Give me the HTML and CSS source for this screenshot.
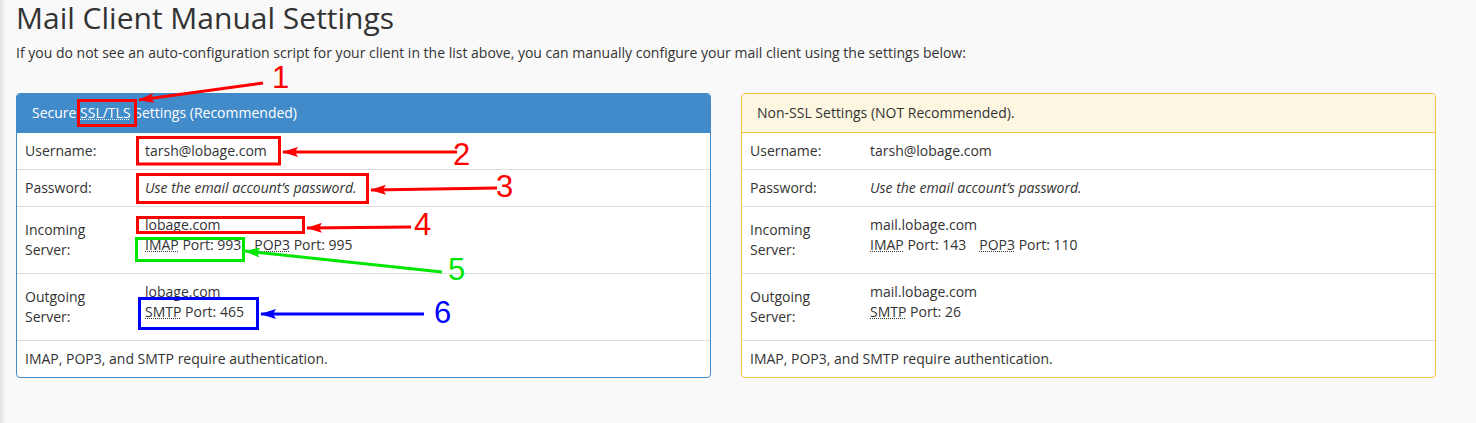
FILE: index.html
```html
<!DOCTYPE html>
<html lang="en">
<head>
<meta charset="utf-8">
<title>Mail Client Manual Settings</title>
<link rel="stylesheet" href="styles.css">
</head>
<body>
<div class="content">
  <h1 class="title">Mail Client Manual Settings</h1>
  <p class="intro">If you do not see an auto-configuration script for your client in the list above, you can manually configure your mail client using the settings below:</p>
  <div class="panels">
    <section class="panel panel-primary">
      <div class="panel-heading">Secure <abbr title="Secure Sockets Layer/Transport Layer Security">SSL/TLS</abbr> Settings (Recommended)</div>
      <div class="row"><div class="label">Username:</div><div class="value">tarsh@lobage.com</div></div>
      <div class="row"><div class="label">Password:</div><div class="value"><em>Use the email account’s password.</em></div></div>
      <div class="row"><div class="label">Incoming Server:</div><div class="value"><div>lobage.com</div><div class="ports"><span><abbr title="Internet Message Access Protocol">IMAP</abbr> Port: 993</span><span><abbr title="Post Office Protocol 3">POP3</abbr> Port: 995</span></div></div></div>
      <div class="row"><div class="label">Outgoing Server:</div><div class="value"><div>lobage.com</div><div class="ports"><span><abbr title="Simple Mail Transfer Protocol">SMTP</abbr> Port: 465</span></div></div></div>
      <div class="row row-full">IMAP, POP3, and SMTP require authentication.</div>
    </section>
    <section class="panel panel-warning">
      <div class="panel-heading">Non-SSL Settings (NOT Recommended).</div>
      <div class="row"><div class="label">Username:</div><div class="value">tarsh@lobage.com</div></div>
      <div class="row"><div class="label">Password:</div><div class="value"><em>Use the email account’s password.</em></div></div>
      <div class="row"><div class="label">Incoming Server:</div><div class="value"><div>mail.lobage.com</div><div class="ports"><span><abbr title="Internet Message Access Protocol">IMAP</abbr> Port: 143</span><span><abbr title="Post Office Protocol 3">POP3</abbr> Port: 110</span></div></div></div>
      <div class="row"><div class="label">Outgoing Server:</div><div class="value"><div>mail.lobage.com</div><div class="ports"><span><abbr title="Simple Mail Transfer Protocol">SMTP</abbr> Port: 26</span></div></div></div>
      <div class="row row-full">IMAP, POP3, and SMTP require authentication.</div>
    </section>
  </div>
</div>

<svg class="annotations" width="1476" height="423" viewBox="0 0 1476 423" aria-hidden="true">
  <defs>
    <marker id="ah-red" viewBox="0 0 16 10" refX="15" refY="5" markerWidth="16" markerHeight="10" markerUnits="userSpaceOnUse" orient="auto">
      <path d="M0 0 L16 5 L0 10 L3 5 Z" fill="#ff0000"/>
    </marker>
    <marker id="ah-green" viewBox="0 0 16 10" refX="15" refY="5" markerWidth="16" markerHeight="10" markerUnits="userSpaceOnUse" orient="auto">
      <path d="M0 0 L16 5 L0 10 L3 5 Z" fill="#00e600"/>
    </marker>
    <marker id="ah-blue" viewBox="0 0 16 10" refX="15" refY="5" markerWidth="16" markerHeight="10" markerUnits="userSpaceOnUse" orient="auto">
      <path d="M0 0 L16 5 L0 10 L3 5 Z" fill="#0000ff"/>
    </marker>
  </defs>
  <g fill="none" stroke-width="3">
    <rect x="78.5" y="100.5" width="57" height="25" stroke="#ff0000"/>
    <rect x="137.5" y="137.5" width="142" height="26.5" stroke="#ff0000"/>
    <rect x="137.5" y="174.5" width="230" height="28" stroke="#ff0000"/>
    <rect x="137.5" y="217.5" width="166" height="15" stroke="#ff0000"/>
    <rect x="136.5" y="238.5" width="107" height="22" stroke="#00e600"/>
    <rect x="139.5" y="298.5" width="118" height="30" stroke="#0000ff"/>
    <line x1="263" y1="83" x2="139" y2="100" stroke="#ff0000" marker-end="url(#ah-red)"/>
    <line x1="457" y1="152" x2="283" y2="152" stroke="#ff0000" marker-end="url(#ah-red)"/>
    <line x1="497" y1="188" x2="371" y2="190" stroke="#ff0000" marker-end="url(#ah-red)"/>
    <line x1="411" y1="227" x2="307" y2="228" stroke="#ff0000" marker-end="url(#ah-red)"/>
    <line x1="442" y1="272" x2="245" y2="251" stroke="#00e600" marker-end="url(#ah-green)"/>
    <line x1="424" y1="314" x2="261" y2="314" stroke="#0000ff" marker-end="url(#ah-blue)"/>
  </g>
  <g class="anno-num">
    <text x="272" y="88" fill="#ff0000">1</text>
    <text x="453" y="165" fill="#ff0000">2</text>
    <text x="496" y="197" fill="#ff0000">3</text>
    <text x="414" y="235" fill="#ff0000">4</text>
    <text x="448" y="280" fill="#00e600">5</text>
    <text x="434" y="323" fill="#0000ff">6</text>
  </g>
</svg>
</body>
</html>
```

FILE: styles.css
```css
html, body {
  margin: 0;
  padding: 0;
}

body {
  position: relative;
  min-height: 423px;
  background: linear-gradient(to right, #e2e2e2 0, #efefef 3px, #f9f9f9 6px) #f9f9f9;
  font-family: "Open Sans", "Liberation Sans", Arial, sans-serif;
  font-size: 14px;
  line-height: 20px;
  color: #333;
}

.content {
  width: 1420px;
  padding-left: 16px;
}

.title {
  margin: 0 0 7px 0;
  font-size: 30px;
  line-height: 36px;
  font-weight: 400;
  color: #333;
}

.intro {
  margin: 0 0 30px 0;
}

.panels {
  display: grid;
  grid-template-columns: 1fr 1fr;
  gap: 30px;
  align-items: start;
}

.panel {
  background: #fff;
  border: 1px solid #ddd;
  border-radius: 4px;
  overflow: hidden;
}

.panel-heading {
  padding: 9px 15px;
  border-bottom: 1px solid transparent;
}

.panel-primary {
  border-color: #428bca;
}

.panel-primary .panel-heading {
  background: #428bca;
  border-bottom-color: #428bca;
  color: #fff;
}

.panel-warning {
  border-color: #f5c343;
}

.panel-warning .panel-heading {
  background: #fdf7e1;
  border-bottom-color: #f5c343;
  color: #333;
}

abbr {
  text-decoration: underline dotted;
  text-decoration-thickness: 1px;
  cursor: help;
}

.row {
  display: grid;
  grid-template-columns: 120px 1fr;
  align-items: center;
  border-top: 1px solid #ddd;
}

.panel-heading + .row {
  border-top: 0;
}

.label,
.value {
  padding: 8px;
}

.label {
  padding-right: 16px;
}

.value em {
  font-style: italic;
}

.ports {
  display: flex;
  gap: 13px;
  margin-bottom: 10px;
}

.row-full {
  display: block;
  padding: 8px;
}

.annotations {
  position: absolute;
  top: 0;
  left: 0;
  pointer-events: none;
}

.anno-num {
  font-family: "Liberation Sans", Arial, sans-serif;
  font-size: 31px;
}
```
